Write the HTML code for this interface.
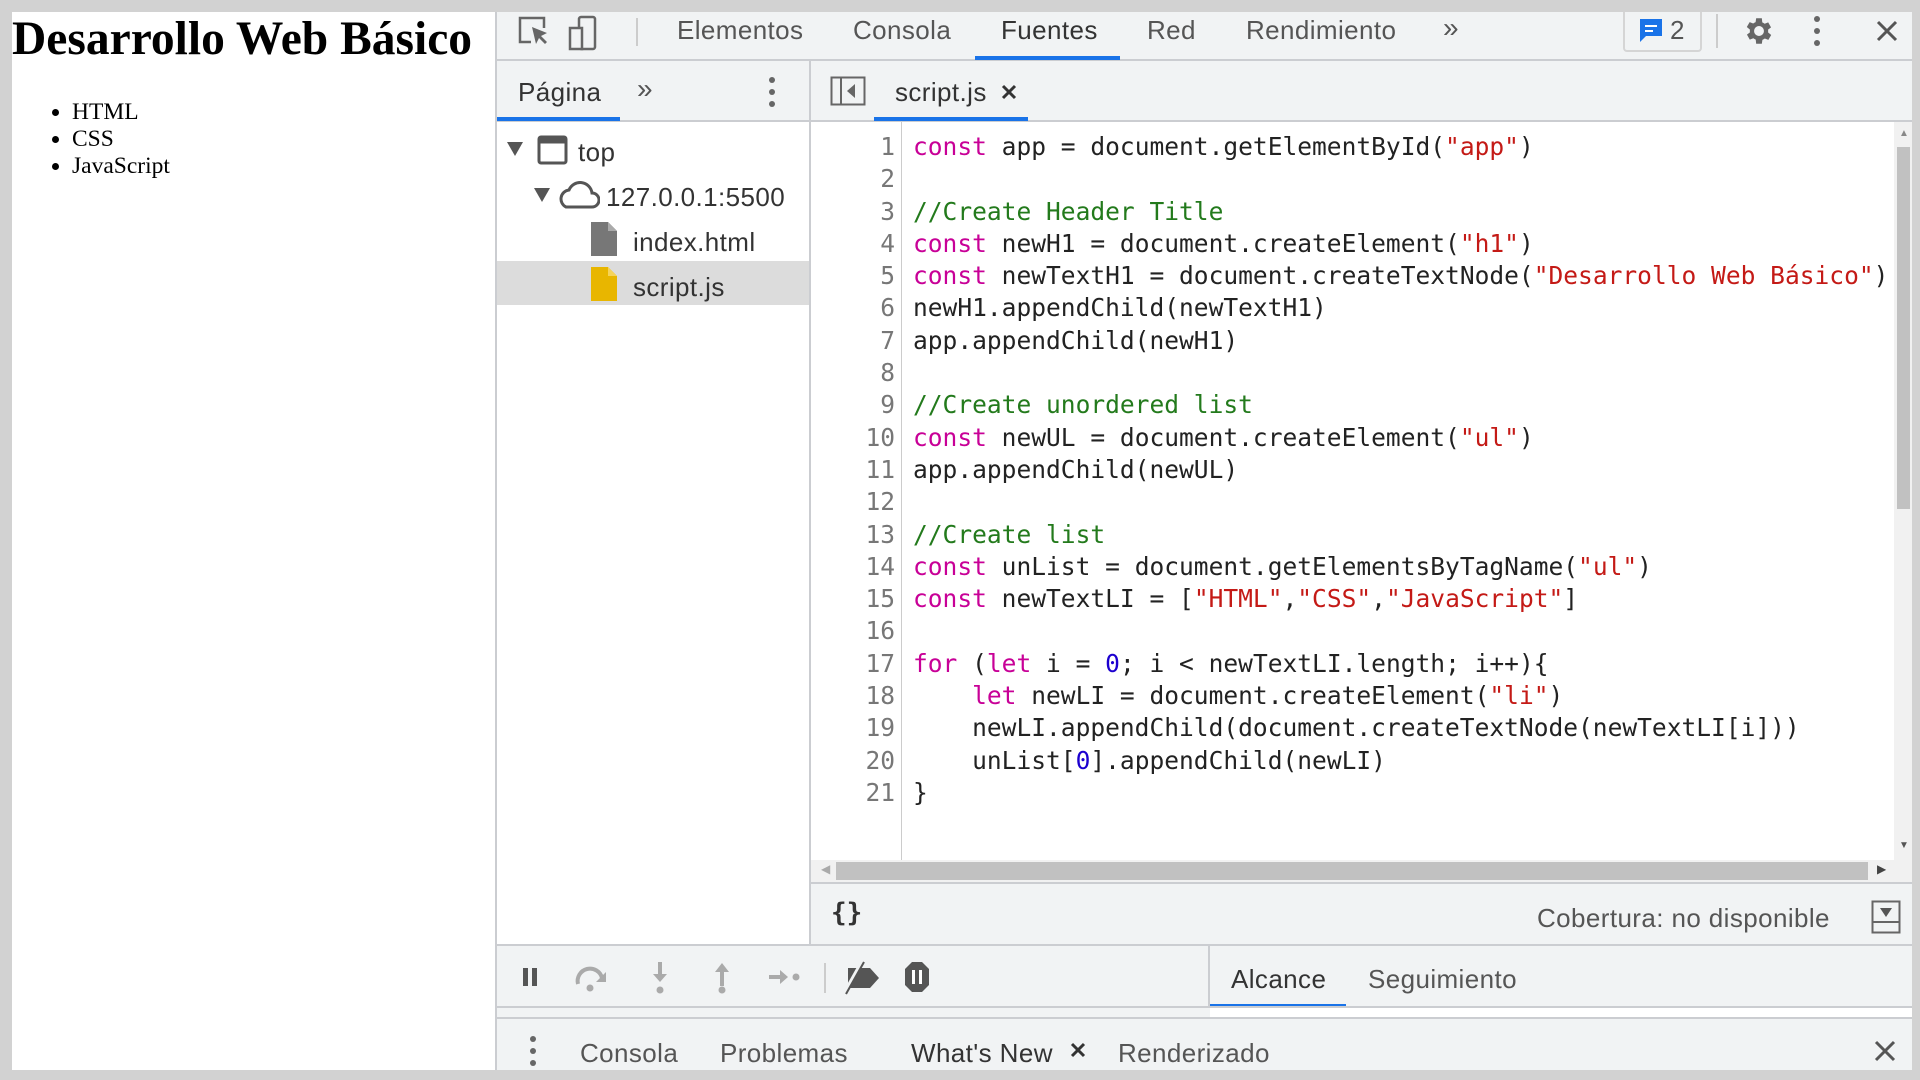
<!DOCTYPE html>
<html><head><meta charset="utf-8"><style>
*{margin:0;padding:0;box-sizing:border-box}
body{width:1920px;height:1080px;background:#d2d2d2;position:relative;overflow:hidden;font-family:"Liberation Sans",sans-serif}
.a{position:absolute}
.ui{font-size:26px;letter-spacing:0.4px;color:#555}
.code{font-family:"DejaVu Sans Mono","Liberation Mono",monospace;font-size:24.55px;color:#222;white-space:pre;line-height:32.3px}
.k{color:#c80097}.s{color:#c41a16}.c{color:#237a1c}.n{color:#1c00cf}
</style></head><body>
<!-- page -->
<div class="a" style="left:12px;top:12px;width:483px;height:1058px;background:#fff">
<div class="a" style="left:0;top:0px;font-family:'Liberation Serif',serif;font-weight:bold;font-size:47.5px;color:#000;white-space:nowrap">Desarrollo Web Básico</div>
<ul class="a" style="left:60px;top:87px;font-family:'Liberation Serif',serif;font-size:23.5px;line-height:27px;color:#000">
<li>HTML</li><li>CSS</li><li>JavaScript</li></ul>
</div>
<!-- devtools -->
<div class="a" style="left:495px;top:12px;width:1417px;height:1058px;background:#f1f3f4;border-left:2px solid #cbcdd1"></div>
<!-- top toolbar -->
<div class="a" style="left:497px;top:59px;width:1415px;height:2px;background:#cbcdd1"></div>
<div class="a" style="left:975px;top:56px;width:145px;height:4px;background:#1a73e8"></div>
<svg class="a" style="left:515px;top:14px" width="100" height="40" viewBox="0 0 100 40"><path d="M16 28H5V4h24v10" fill="none" stroke="#666" stroke-width="2.5"/><path d="M17 13l4 17 3-6 6 6 2-2-6-6 6-3z" fill="#666"/><rect x="64" y="3" width="16" height="32" rx="2" fill="none" stroke="#666" stroke-width="2.5"/><rect x="55" y="14" width="12" height="21" fill="#f1f3f4" stroke="#666" stroke-width="2.5"/></svg>
<div class="a" style="left:636px;top:18px;width:2px;height:28px;background:#ccc"></div>
<div class="a ui" style="left:677px;top:15px">Elementos</div>
<div class="a ui" style="left:853px;top:15px">Consola</div>
<div class="a ui" style="left:1001px;top:15px;color:#333">Fuentes</div>
<div class="a ui" style="left:1147px;top:15px">Red</div>
<div class="a ui" style="left:1246px;top:15px">Rendimiento</div>
<div class="a ui" style="left:1443px;top:12px;font-size:28px">»</div>
<div class="a" style="left:1623px;top:12px;width:79px;height:40px;border:2px solid #d5d5d5;border-top:none;border-radius:0 0 4px 4px"></div>
<svg class="a" style="left:1638px;top:17px" width="26" height="28"><path d="M2 2h22v17H8l-6 6z" fill="#1a73e8"/><path d="M7 9h12M7 14h8" stroke="#fff" stroke-width="2"/></svg>
<div class="a ui" style="left:1670px;top:15px">2</div>
<div class="a" style="left:1716px;top:14px;width:2px;height:34px;background:#ccc"></div>
<svg class="a" style="left:1742px;top:14px" width="34" height="34" viewBox="0 0 24 24"><path fill="#666" d="M19.4 13a7.5 7.5 0 000-2l2.1-1.6-2-3.5-2.5 1a7.4 7.4 0 00-1.7-1L15 3h-4l-.4 2.7c-.6.3-1.2.6-1.7 1l-2.5-1-2 3.5L6.6 11a7.500 7.500 0 000 2l-2.1 1.6 2 3.5 2.5-1c.5.4 1.1.7 1.7 1L11 21h4l.4-2.7c.6-.3 1.200-.6 1.7-1l2.5 1 2-3.5zM13 15.5a3.5 3.5 0 110-7 3.5 3.5 0 010 7z" transform="translate(-1 0)"/></svg>
<svg class="a" style="left:1812px;top:14px" width="10" height="34"><circle cx="5" cy="5" r="3" fill="#666"/><circle cx="5" cy="17" r="3" fill="#666"/><circle cx="5" cy="29" r="3" fill="#666"/></svg>
<svg class="a" style="left:1875px;top:19px" width="24" height="24"><path d="M3 3l18 18M21 3L3 21" stroke="#555" stroke-width="3"/></svg>
<!-- second row -->
<div class="a" style="left:497px;top:120px;width:1415px;height:2px;background:#cbcdd1"></div>
<div class="a" style="left:809px;top:61px;width:2px;height:885px;background:#cbcdd1"></div>
<div class="a ui" style="left:518px;top:77px;color:#333">Página</div>
<div class="a ui" style="left:637px;top:73px;font-size:28px">»</div>
<svg class="a" style="left:767px;top:75px" width="10" height="34"><circle cx="5" cy="5" r="3" fill="#666"/><circle cx="5" cy="17" r="3" fill="#666"/><circle cx="5" cy="29" r="3" fill="#666"/></svg>
<div class="a" style="left:497px;top:117px;width:123px;height:4px;background:#1a73e8"></div>
<svg class="a" style="left:830px;top:76px" width="36" height="30"><rect x="1.5" y="1.5" width="33" height="27" fill="none" stroke="#666" stroke-width="2"/><path d="M11 2v26" stroke="#666" stroke-width="2"/><path d="M25 8v14l-8-7z" fill="#666"/></svg>
<div class="a ui" style="left:895px;top:77px;color:#333">script.js</div>
<svg class="a" style="left:1000px;top:83px" width="18" height="18"><path d="M3 3l12 12M15 3L3 15" stroke="#333" stroke-width="3"/></svg>
<div class="a" style="left:874px;top:117px;width:154px;height:4px;background:#1a73e8"></div>
<!-- navigator -->
<div class="a" style="left:497px;top:122px;width:312px;height:823px;background:#fff"></div>
<div class="a" style="left:497px;top:261px;width:312px;height:44px;background:#dcdcdc"></div>
<svg class="a" style="left:505px;top:140px" width="20" height="18"><path d="M2 2h16l-8 14z" fill="#555"/></svg>
<svg class="a" style="left:537px;top:135px" width="32" height="30"><rect x="2" y="2" width="27" height="26" rx="2" fill="none" stroke="#555" stroke-width="3"/><path d="M2 6h27" stroke="#555" stroke-width="5"/></svg>
<div class="a ui" style="left:578px;top:137px;color:#333">top</div>
<svg class="a" style="left:532px;top:186px" width="20" height="18"><path d="M2 2h16l-8 14z" fill="#555"/></svg>
<svg class="a" style="left:556px;top:178px" width="44" height="32"><path d="M10 29h26a7 7 0 000-14 12 12 0 00-23-3 9 9 0 00-3 17z" fill="none" stroke="#555" stroke-width="3"/></svg>
<div class="a ui" style="left:606px;top:182px;color:#333">127.0.0.1:5500</div>
<svg class="a" style="left:590px;top:221px" width="28" height="36"><path d="M1 1h17l9 9v25H1z" fill="#777"/><path d="M18 1v9h9" fill="#aaa"/></svg>
<div class="a ui" style="left:633px;top:227px;color:#333">index.html</div>
<svg class="a" style="left:590px;top:266px" width="28" height="36"><path d="M1 1h17l9 9v25H1z" fill="#e8b600"/><path d="M18 1v9h9" fill="#f5d35a"/></svg>
<div class="a ui" style="left:633px;top:272px;color:#333">script.js</div>
<!-- editor -->
<div class="a" style="left:811px;top:122px;width:1101px;height:740px;background:#fff"></div>
<div class="a" style="left:901px;top:122px;width:1px;height:740px;background:#ccc"></div>
<div class="a code" style="left:811px;top:131px;width:84px;text-align:right;color:#777">1
2
3
4
5
6
7
8
9
10
11
12
13
14
15
16
17
18
19
20
21</div>
<div class="a code" style="left:913px;top:131px"><span class="k">const</span> app = document.getElementById(<span class="s">"app"</span>)

<span class="c">//Create Header Title</span>
<span class="k">const</span> newH1 = document.createElement(<span class="s">"h1"</span>)
<span class="k">const</span> newTextH1 = document.createTextNode(<span class="s">"Desarrollo Web Básico"</span>)
newH1.appendChild(newTextH1)
app.appendChild(newH1)

<span class="c">//Create unordered list</span>
<span class="k">const</span> newUL = document.createElement(<span class="s">"ul"</span>)
app.appendChild(newUL)

<span class="c">//Create list</span>
<span class="k">const</span> unList = document.getElementsByTagName(<span class="s">"ul"</span>)
<span class="k">const</span> newTextLI = [<span class="s">"HTML"</span>,<span class="s">"CSS"</span>,<span class="s">"JavaScript"</span>]

<span class="k">for</span> (<span class="k">let</span> i = <span class="n">0</span>; i &lt; newTextLI.length; i++){
    <span class="k">let</span> newLI = document.createElement(<span class="s">"li"</span>)
    newLI.appendChild(document.createTextNode(newTextLI[i]))
    unList[<span class="n">0</span>].appendChild(newLI)
}</div>
<!-- v scrollbar -->
<div class="a" style="left:1894px;top:122px;width:18px;height:740px;background:#f1f1f1"></div>
<div class="a" style="left:1897px;top:147px;width:13px;height:362px;background:#c1c1c1"></div>
<div class="a" style="left:1899px;top:128px;font-size:10px;color:#888">▲</div>
<div class="a" style="left:1899px;top:840px;font-size:10px;color:#555">▼</div>
<!-- h scrollbar -->
<div class="a" style="left:811px;top:860px;width:1101px;height:22px;background:#f1f1f1"></div>
<div class="a" style="left:836px;top:862px;width:1032px;height:18px;background:#c1c1c1"></div>
<div class="a" style="left:821px;top:862px;font-size:12px;color:#aaa">◀</div>
<div class="a" style="left:1877px;top:862px;font-size:12px;color:#444">▶</div>
<div class="a" style="left:811px;top:882px;width:1101px;height:2px;background:#cbcdd1"></div>
<div class="a ui" style="left:831px;top:898px;color:#333;font-family:'DejaVu Sans Mono',monospace;font-weight:bold;letter-spacing:0">{}</div>
<div class="a ui" style="left:1537px;top:903px">Cobertura: no disponible</div>
<svg class="a" style="left:1871px;top:900px" width="30" height="34"><rect x="1.5" y="1.5" width="27" height="31" fill="none" stroke="#666" stroke-width="2"/><path d="M1 22h28" stroke="#666" stroke-width="2"/><path d="M9 8h12l-6 9z" fill="#555"/></svg>
<!-- debugger toolbar -->
<div class="a" style="left:497px;top:944px;width:1415px;height:2px;background:#cbcdd1"></div>
<div class="a" style="left:1208px;top:946px;width:2px;height:61px;background:#cbcdd1"></div>
<svg class="a" style="left:520px;top:960px" width="420" height="36"><rect x="3" y="8" width="5" height="18" fill="#555"/><rect x="12" y="8" width="5" height="18" fill="#555"/>
<path d="M58 24a12 12 0 0124-6" fill="none" stroke="#aaa" stroke-width="4"/><path d="M86 12v10h-10z" fill="#aaa"/><circle cx="70" cy="28" r="3.5" fill="#aaa"/>
<path d="M140 2v16" stroke="#aaa" stroke-width="4"/><path d="M133 14h14l-7 8z" fill="#aaa"/><circle cx="140" cy="30" r="3.5" fill="#aaa"/>
<path d="M202 10v16" stroke="#aaa" stroke-width="4"/><path d="M195 12h14l-7-9z" fill="#aaa"/><circle cx="202" cy="30" r="3.5" fill="#aaa"/>
<path d="M249 17h14" stroke="#aaa" stroke-width="4"/><path d="M260 10v14l8-7z" fill="#aaa"/><circle cx="276" cy="17" r="3.5" fill="#aaa"/>
<path d="M305 3v30" stroke="#ccc" stroke-width="2"/>
<path d="M328 8h22l9 10-9 10h-22z" fill="#555"/><path d="M324 34l18-32" stroke="#f1f3f4" stroke-width="4"/><path d="M326 34l18-32" stroke="#555" stroke-width="2"/>
<path d="M392 2h10l7 7v16l-7 7h-10l-7-7V9z" fill="#555"/><rect x="392" y="10" width="3" height="14" fill="#fff"/><rect x="399" y="10" width="3" height="14" fill="#fff"/></svg>
<div class="a ui" style="left:1231px;top:964px;color:#333">Alcance</div>
<div class="a ui" style="left:1368px;top:964px">Seguimiento</div>
<div class="a" style="left:1210px;top:1004px;width:136px;height:4px;background:#1a73e8"></div>
<div class="a" style="left:497px;top:1006px;width:1415px;height:2px;background:#cbcdd1"></div>
<div class="a" style="left:1210px;top:1008px;width:702px;height:10px;background:#fff"></div>
<div class="a" style="left:497px;top:1017px;width:1415px;height:2px;background:#cbcdd1"></div>
<!-- drawer -->
<svg class="a" style="left:528px;top:1034px" width="10" height="34"><circle cx="5" cy="5" r="3" fill="#666"/><circle cx="5" cy="17" r="3" fill="#666"/><circle cx="5" cy="29" r="3" fill="#666"/></svg>
<div class="a ui" style="left:580px;top:1038px">Consola</div>
<div class="a ui" style="left:720px;top:1038px">Problemas</div>
<div class="a ui" style="left:911px;top:1038px;color:#333">What's New</div>
<svg class="a" style="left:1069px;top:1041px" width="18" height="18"><path d="M3 3l12 12M15 3L3 15" stroke="#333" stroke-width="3"/></svg>
<div class="a ui" style="left:1118px;top:1038px">Renderizado</div>
<svg class="a" style="left:1873px;top:1039px" width="24" height="24"><path d="M3 3l18 18M21 3L3 21" stroke="#555" stroke-width="3"/></svg>
</body></html>
